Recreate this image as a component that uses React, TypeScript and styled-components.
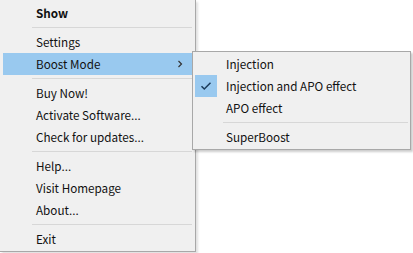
import React from "react";
import styled, { createGlobalStyle } from "styled-components";

const GlobalStyle = createGlobalStyle`
  html, body {
    margin: 0;
    padding: 0;
    background: #ffffff;
    font-family: "Noto Sans CJK KR", "Noto Sans", sans-serif;
  }
`;

type Entry = { label?: string; bold?: boolean; sub?: boolean; active?: boolean; sep?: boolean };

const mainItems: Entry[] = [
  { label: "Show", bold: true },
  { sep: true },
  { label: "Settings" },
  { label: "Boost Mode", sub: true, active: true },
  { sep: true },
  { label: "Buy Now!" },
  { label: "Activate Software..." },
  { label: "Check for updates..." },
  { sep: true },
  { label: "Help..." },
  { label: "Visit Homepage" },
  { label: "About..." },
  { sep: true },
  { label: "Exit" },
];

const subItems = [
  { label: "Injection" },
  { label: "Injection and APO effect", checked: true },
  { label: "APO effect" },
  { sep: true },
  { label: "SuperBoost" },
];

const App = () => {
  return (
    <Page>
      <GlobalStyle />
      <Menu>
        {mainItems.map((it, i) =>
          it.sep ? (
            <Separator key={i} />
          ) : (
            <Item key={i} $active={it.active}>
              <Label $bold={it.bold}>{it.label}</Label>
              {it.sub && (
                <Arrow viewBox="0 0 6 8">
                  <path d="M1.5 1 L4.5 4 L1.5 7" fill="none" stroke="#333" strokeWidth="1.2" />
                </Arrow>
              )}
            </Item>
          )
        )}
      </Menu>
      <SubMenu>
        {subItems.map((it, i) =>
          it.sep ? (
            <SubSeparator key={i} />
          ) : (
            <SubItem key={i}>
              <CheckBox $checked={it.checked}>
                {it.checked && (
                  <svg width="12" height="10" viewBox="0 0 12 10">
                    <path d="M1.5 5.2 L4.3 8 L10.5 1.8" fill="none" stroke="#1b3b5a" strokeWidth="1.5" />
                  </svg>
                )}
              </CheckBox>
              <SubLabel>{it.label}</SubLabel>
            </SubItem>
          )
        )}
      </SubMenu>
    </Page>
  );
};
export default App;

const Page = styled.div`
  position: relative;
  width: 413px;
  height: 253px;
  overflow: hidden;
  background: #ffffff;
`;

const Menu = styled.div`
  width: 193px;
  padding: 2px 1px 1px 1px;
  background: #f0f0f0;
  border-right: 1px solid #a8a8a8;
  border-bottom: 1px solid #a8a8a8;
  box-shadow: 2px 2px 2px rgba(0, 0, 0, 0.12);
  display: flex;
  flex-direction: column;
`;

const Item = styled.div<{ $active?: boolean }>`
  height: 22px;
  display: flex;
  align-items: center;
  margin: 0 2px;
  padding-left: 33px;
  padding-right: 9px;
  background: ${(p) => (p.$active ? "#99c9ef" : "transparent")};
  color: #111;
`;

const Label = styled.span<{ $bold?: boolean }>`
  flex: 1;
  font-size: 11.7px;
  line-height: 14px;
  font-weight: ${(p) => (p.$bold ? 700 : 400)};
  white-space: nowrap;
`;

const Arrow = styled.svg`
  width: 6px;
  height: 8px;
`;

const Separator = styled.div`
  height: 7px;
  margin-left: 31px;
  margin-right: 2px;
  display: flex;
  align-items: center;
  &::after {
    content: "";
    flex: 1;
    height: 1px;
    background: #d7d7d7;
  }
`;

const SubMenu = styled.div`
  position: absolute;
  left: 192px;
  top: 51px;
  width: 215px;
  padding: 1px 1px 1px 1px;
  background: #f0f0f0;
  border: 1px solid #a8a8a8;
  box-shadow: 2px 2px 2px rgba(0, 0, 0, 0.2);
  display: flex;
  flex-direction: column;
`;

const SubItem = styled.div`
  height: 22px;
  display: flex;
  align-items: center;
  padding-left: 1px;
`;

const CheckBox = styled.div<{ $checked?: boolean }>`
  width: 22px;
  height: 22px;
  display: flex;
  align-items: center;
  justify-content: center;
  background: ${(p) => (p.$checked ? "#99c9ef" : "transparent")};
`;

const SubLabel = styled.span`
  margin-left: 9px;
  font-size: 11.7px;
  line-height: 14px;
  color: #111;
  white-space: nowrap;
`;

const SubSeparator = styled.div`
  height: 7px;
  margin-left: 29px;
  margin-right: 1px;
  display: flex;
  align-items: center;
  &::after {
    content: "";
    flex: 1;
    height: 1px;
    background: #d7d7d7;
  }
`;
